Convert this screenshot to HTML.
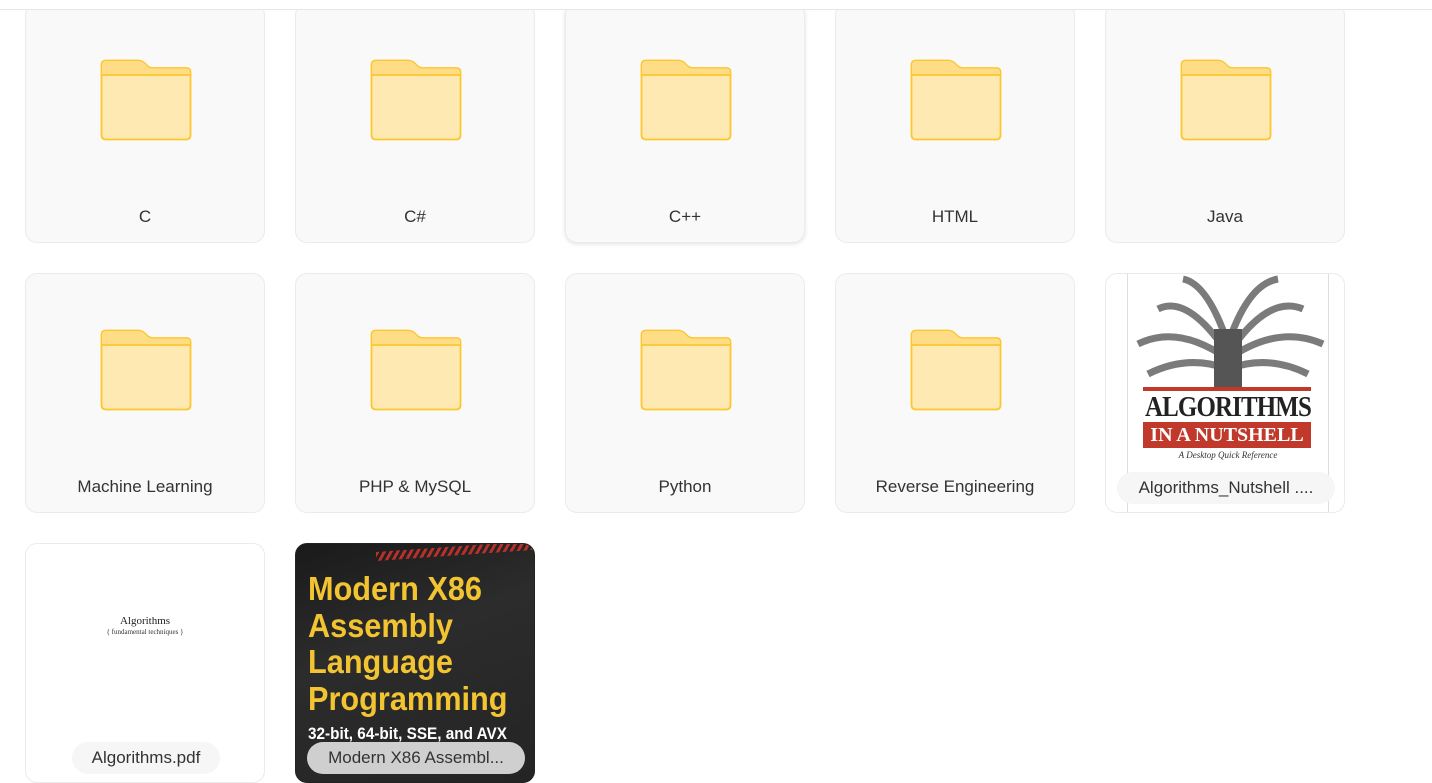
<!DOCTYPE html>
<html><head><style>
body{margin:0;width:1432px;height:777px;overflow:hidden;background:#fff;font-family:"Liberation Sans",sans-serif;position:relative}
.top{position:absolute;left:0;top:0;width:1432px;height:9px;background:#fff;border-bottom:1px solid #e6e6e6;z-index:5}
.card{position:absolute;width:238px;height:238px;border:1px solid #ebebeb;border-radius:12px;background:#f9f9f9;overflow:hidden}
.card svg.f{position:absolute;left:74px;top:55px}
.lbl{position:absolute;left:0;right:0;top:203px;text-align:center;font-size:17px;color:#333}
.pill{position:absolute;top:198px;height:32px;line-height:32px;border-radius:16px;text-align:center;font-size:17px;color:#333}
</style></head><body>
<div class="top"></div>
<div class="card" style="left:25px;top:3px"><svg class="f" width="92" height="82"><use href="#fd"/></svg><div class="lbl">C</div></div>
<div class="card" style="left:295px;top:3px"><svg class="f" width="92" height="82"><use href="#fd"/></svg><div class="lbl">C#</div></div>
<div class="card" style="left:565px;top:3px;box-shadow:0 1px 4px rgba(0,0,0,.12)"><svg class="f" width="92" height="82"><use href="#fd"/></svg><div class="lbl">C++</div></div>
<div class="card" style="left:835px;top:3px"><svg class="f" width="92" height="82"><use href="#fd"/></svg><div class="lbl">HTML</div></div>
<div class="card" style="left:1105px;top:3px"><svg class="f" width="92" height="82"><use href="#fd"/></svg><div class="lbl">Java</div></div>
<div class="card" style="left:25px;top:273px"><svg class="f" width="92" height="82"><use href="#fd"/></svg><div class="lbl">Machine Learning</div></div>
<div class="card" style="left:295px;top:273px"><svg class="f" width="92" height="82"><use href="#fd"/></svg><div class="lbl">PHP &amp; MySQL</div></div>
<div class="card" style="left:565px;top:273px"><svg class="f" width="92" height="82"><use href="#fd"/></svg><div class="lbl">Python</div></div>
<div class="card" style="left:835px;top:273px"><svg class="f" width="92" height="82"><use href="#fd"/></svg><div class="lbl">Reverse Engineering</div></div>
<div class="card" style="left:1105px;top:273px;background:#fff">
 <div style="position:absolute;left:21px;top:0;width:200px;height:240px;border-left:1px solid #ddd;border-right:1px solid #ddd;background:#fff"></div>
 <svg style="position:absolute;left:22px;top:0" width="200" height="115"><g stroke="#444" stroke-width="7" fill="none" opacity=".7"><path d="M100 80 Q60 20 30 35"/><path d="M100 80 Q140 20 175 35"/><path d="M100 85 Q50 50 10 70"/><path d="M100 85 Q150 50 195 70"/><path d="M100 70 Q80 10 55 5"/><path d="M100 70 Q120 10 150 5"/><path d="M100 95 Q60 80 20 100"/><path d="M100 95 Q140 80 180 100"/></g><rect x="86" y="55" width="28" height="60" fill="#555"/></svg>
 <div style="position:absolute;left:37px;top:113px;width:168px;height:4px;background:#c0392b"></div>
 <div style="position:absolute;left:22px;top:117px;width:200px;text-align:center;font-family:'Liberation Serif',serif;font-size:29px;font-weight:bold;color:#222;letter-spacing:-1px;transform:scaleX(.86)">ALGORITHMS</div>
 <div style="position:absolute;left:37px;top:148px;width:168px;height:26px;background:#c0392b;color:#fff;text-align:center;font-family:'Liberation Serif',serif;font-size:20px;font-weight:bold;line-height:26px">IN A NUTSHELL</div>
 <div style="position:absolute;left:22px;top:176px;width:200px;text-align:center;font-family:'Liberation Serif',serif;font-style:italic;font-size:9px;color:#333">A Desktop Quick Reference</div>
 <div class="pill" style="left:11px;width:218px;background:#f6f6f6">Algorithms_Nutshell ....</div>
</div>
<div class="card" style="left:25px;top:543px;background:#fff">
 <div style="position:absolute;left:0;right:0;top:71px;text-align:center;font-family:'Liberation Serif',serif;font-size:11px;color:#222">Algorithms</div>
 <div style="position:absolute;left:0;right:0;top:84px;text-align:center;font-family:'Liberation Serif',serif;font-size:7px;color:#333">{ fundamental techniques }</div>
 <div class="pill" style="left:46px;width:148px;background:#f6f6f6">Algorithms.pdf</div>
</div>
<div class="card" style="left:295px;top:543px;background:linear-gradient(160deg,#1a1a1a,#2c2c2c 40%,#242424);border-color:#222">
 <div style="position:absolute;left:80px;top:2px;width:170px;height:9px;background:repeating-linear-gradient(120deg,#b8302a 0 3px,transparent 3px 6px);transform:skewY(-4deg)"></div>
 <div style="position:absolute;left:12px;top:27px;font-size:33px;line-height:36.5px;font-weight:bold;color:#f2c431;transform:scaleX(.93);transform-origin:left;white-space:nowrap">Modern X86<br>Assembly<br>Language<br>Programming</div>
 <div style="position:absolute;left:12px;top:180px;font-size:17px;font-weight:bold;color:#fff;transform:scaleX(.9);transform-origin:left;white-space:nowrap">32-bit, 64-bit, SSE, and AVX</div>
 <div class="pill" style="left:11px;width:218px;background:#cfcfcf">Modern X86 Assembl...</div>
</div>
<svg width="0" height="0" style="position:absolute"><defs><g id="fd"><path d="M1.5 6 Q1.5 1.5 6 1.5 H38 Q42 1.5 45 4.5 L48 7.5 Q50 9 53 9 H86 Q90.5 9 90.5 13 V76 Q90.5 80.5 86 80.5 H6 Q1.5 80.5 1.5 76 Z" fill="#ffe9b3" stroke="#fcc62d" stroke-width="1.8"/><path d="M2 6 Q2 2 6 2 H38 Q42 2 45 5 L48 8 Q50 9.5 53 9.5 H86 Q90 9.5 90 13 V16 H2 Z" fill="#ffdd86"/><line x1="1.5" y1="16" x2="90.5" y2="16" stroke="#fcc62d" stroke-width="1.8"/></g></defs></svg>
</body></html>
